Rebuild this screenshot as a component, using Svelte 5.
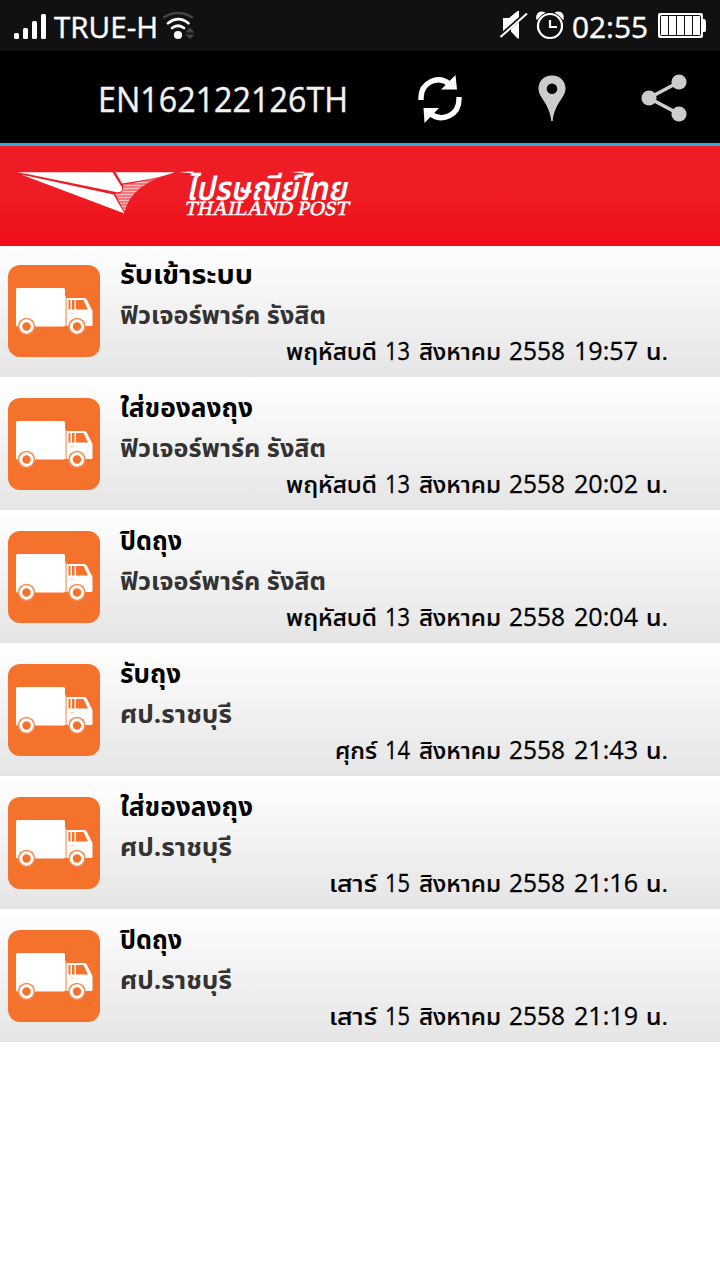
<script>
  const events = [
    { title: 'รับเข้าระบบ', tw: 133, place: 'ฟิวเจอร์พาร์ค รังสิต', pw: 206, day: 'พฤหัสบดี', dw: 91, date: '13', time: '19:57' },
    { title: 'ใส่ของลงถุง', tw: 133, place: 'ฟิวเจอร์พาร์ค รังสิต', pw: 206, day: 'พฤหัสบดี', dw: 91, date: '13', time: '20:02' },
    { title: 'ปิดถุง', tw: 62, place: 'ฟิวเจอร์พาร์ค รังสิต', pw: 206, day: 'พฤหัสบดี', dw: 91, date: '13', time: '20:04' },
    { title: 'รับถุง', tw: 61, place: 'ศป.ราชบุรี', pw: 112, day: 'ศุกร์', dw: 42, date: '14', time: '21:43' },
    { title: 'ใส่ของลงถุง', tw: 133, place: 'ศป.ราชบุรี', pw: 112, day: 'เสาร์', dw: 48, date: '15', time: '21:16' },
    { title: 'ปิดถุง', tw: 62, place: 'ศป.ราชบุรี', pw: 112, day: 'เสาร์', dw: 48, date: '15', time: '21:19' }
  ];
</script>

{#snippet fit(text, width, kind)}
  <svg class="fit {kind}" {width} height="36"><text x="0" y="28" textLength={width} lengthAdjust="spacingAndGlyphs">{text}</text></svg>
{/snippet}

<div class="screen">
  <div class="status">
    <svg class="signal" width="33" height="26" viewBox="0 0 33 26" fill="#fff">
      <rect x="0" y="19" width="5" height="6" rx="1.5" /><rect x="9" y="14" width="5" height="11" rx="1.5" />
      <rect x="18" y="7" width="5" height="18" rx="1.5" /><rect x="27" y="0" width="5" height="25" rx="1.5" />
    </svg>
    {@render fit('TRUE-H', 104, 'carrier')}
    <svg class="wifi" width="33" height="30" viewBox="162 11 33 30" fill="none" stroke-linecap="round">
      <path d="M164 17.2Q178 8.8 192 17.2" stroke="#444" stroke-width="2.4" />
      <path d="M168 23.2Q178 15.200 188.500 23.200M172 28Q178 23.500 184 28" stroke="#fff" stroke-width="2.700" />
      <circle cx="178" cy="35" r="4.100" fill="#fff" />
      <path d="M185.500 32.500L190 27.500L194.500 32.500ZM185.500 34.500L190 39L194.500 34.500Z" fill="#444" />
    </svg>
    <span class="grow"></span>
    <svg class="mute" width="30" height="30" viewBox="499 10 30 30" fill="#fff">
      <path d="M503 18H509L517.500 11H519V17L503 31ZM519 22V38.500H517.500L511 31.500V29Z" />
      <path d="M500.500 37L527 13.500" stroke="#fff" stroke-width="2" />
    </svg>
    <svg class="alarm" width="30" height="30" viewBox="535 10 30 30" fill="none" stroke="#fff">
      <path d="M536.500 20C534.500 12 542 9 546.500 13.500ZM563.500 20C565.500 12 558 9 553.500 13.500Z" fill="#fff" stroke="none" />
      <circle cx="550" cy="26" r="13.500" fill="#111" stroke="#111" />
      <circle cx="550" cy="26" r="12" stroke-width="2.200" /><path d="M550 20V27H557" stroke-width="2.200" />
    </svg>
    {@render fit('02:55', 76, 'clock')}
    <svg class="battery" width="49" height="26" viewBox="0 0 49 26">
      <rect x="0" y="0" width="45" height="25" rx="2" fill="#fff" />
      <path d="M45 6H46.500Q48 7 48 9V17Q48 19 46.500 19H45Z" fill="#fff" />
      <rect x="2.500" y="2.500" width="40" height="20" rx="1" fill="#fff" stroke="#111" />
      <path d="M10.500 3V22M18.500 3V22M26.500 3V22M34.500 3V22" stroke="#111" />
    </svg>
  </div>

  <div class="toolbar">
    {@render fit('EN162122126TH', 250, 'code')}
    <svg class="refresh" width="46" height="50" viewBox="417 74 46 50" fill="none">
      <path d="M421 100V98C421 82 438 75 449.500 84M459 97V99C459 115 443 122.500 430.500 114" stroke="#fff" stroke-width="5.400" />
      <path d="M455.500 75L457 89.500H441ZM423.500 108L439 108L424.500 123Z" fill="#fff" />
    </svg>
    <svg class="pin" width="28" height="48" viewBox="538 74 28 48">
      <path fill="#ccc" fill-rule="evenodd" d="M552 75.500C543.500 75.500 538.500 81.500 538.500 88.500C538.500 98 549.500 103 551.300 121H552.700C554.500 103 565.500 98 565.500 88.500C565.500 81.500 560.500 75.500 552 75.500ZM552 83.500A5.300 5.300 0 1 1 552 94.100A5.300 5.300 0 1 1 552 83.500Z" />
    </svg>
    <svg class="share" width="46" height="48" viewBox="641 74 46 48" fill="#ccc">
      <path d="M679 82L649 98L679 114" fill="none" stroke="#ccc" stroke-width="3.600" />
      <circle cx="679" cy="82" r="7.600" /><circle cx="649" cy="98" r="7.600" /><circle cx="679" cy="114" r="7.600" />
    </svg>
  </div>

  <div class="banner">
    <svg class="wing" width="158" height="45" viewBox="17 170 158 45">
      <defs>
        <clipPath id="feathers"><path d="M123 184.500Q146 182 174 172.500Q131 184 124.500 212L115 193.500H120Q124 191 123 184.500Z" /></clipPath>
      </defs>
      <path fill="#fff" d="M17 172.200H112.500L122 187.500Q123 192.500 117 192.200L27 174ZM21 174.500L113.500 194.500L124.500 213.500ZM115.500 172.200H175Q158 178 144 180L122 183.500Z" />
      <g clip-path="url(#feathers)">
        <rect x="112" y="172" width="64" height="42" fill="#fff" opacity=".3" />
        <path d="M112 182.500H176M112 185.500H176M112 188.500H176M112 191.500H176M112 194.500H176M112 197.500H176M112 200.500H176M112 203.500H176M112 206.500H176M112 209.500H176" stroke="#fff" stroke-opacity=".6" stroke-width="1.300" />
      </g>
    </svg>
    <svg class="brand" width="172" height="50" viewBox="0 0 172 50" fill="#fff">
      <g transform="skewX(-12)">
        <path d="M0 3L14 2.500V4.500ZM112 3L125 2.500V4.500Z" />
        <text class="thai" x="12" y="30.500" textLength="161" lengthAdjust="spacingAndGlyphs">ไปรษณีย์ไทย</text>
        <text class="latin" x="14" y="46.500" textLength="164" lengthAdjust="spacingAndGlyphs">THAILAND POST</text>
      </g>
    </svg>
  </div>

  <div class="list">
    {#each events as e}
      <div class="row">
        <svg class="truck" width="92" height="92" viewBox="0 0 92 92">
          <rect width="92" height="92" rx="12" fill="#f4722b" />
          <rect x="8" y="23" width="49" height="38.500" rx="1.500" fill="#fff" />
          <path d="M58.500 33H76Q78 33 79 35L84.500 46V59.500Q84.500 61 83 61H58.500Z" fill="#fff" />
          <path d="M60.500 35H62.500V44.500H60.500ZM64 35H66.500V44.500H64ZM68 35H75.500L80 44.500H68Z" fill="#f4722b" />
          <path d="M57.500 31V61" stroke="#fbc5a6" />
          <path d="M62 48.500H66" stroke="#fbd0b6" />
          {#each [18.5, 69] as x}
            <circle cx={x} cy="61.500" r="8.700" fill="#f68a50" />
            <circle cx={x} cy="61.500" r="5.700" fill="#f4722b" stroke="#fff" stroke-width="3" />
          {/each}
        </svg>
        <div class="info">
          {@render fit(e.title, e.tw, 'title')}
          {@render fit(e.place, e.pw, 'place')}
          <div class="when">
            {@render fit(e.day, e.dw, 'word')}
            {@render fit(e.date, 25, 'num')}
            {@render fit('สิงหาคม', 82, 'word')}
            {@render fit('2558', 56, 'num')}
            {@render fit(e.time, 64, 'num')}
            {@render fit('น.', 22, 'word')}
          </div>
        </div>
      </div>
    {/each}
  </div>
</div>

<style>
  :global(body) { margin: 0; background: #fff; }
  .screen { width: 720px; height: 1280px; overflow: hidden; background: #fff; font-family: "Open Sans", "Noto Sans", "Noto Sans Thai", sans-serif; }
  svg { display: block; flex: none; overflow: visible; }
  .grow { flex: 1; }
  .status { height: 51px; background: #111; display: flex; align-items: flex-start; box-sizing: border-box; padding: 0 14px; }
  .status .signal { margin-top: 14px; }
  .status .fit { margin-top: 10px; fill: #fff; stroke: #fff; stroke-width: .4px; font-size: 29px; }
  .status .carrier { margin-left: 7px; }
  .wifi { margin: 11px 0 0 4px; }
  .mute { margin-top: 10px; }
  .alarm { margin: 10px 7px 0 6px; }
  .battery { margin: 13px -1px 0 10px; }
  .toolbar { height: 92px; background: #000; border-bottom: 3px solid #33a9dc; display: flex; align-items: flex-start; padding-left: 98px; }
  .code { margin-top: 33px; fill: #f3f3f3; stroke: #f3f3f3; stroke-width: .4px; font-size: 34px; }
  .refresh { margin: 23px 0 0 69px; }
  .pin { margin: 23px 0 0 75px; }
  .share { margin: 23px 0 0 75px; }
  .banner { height: 100px; position: relative; z-index: 1; background: linear-gradient(#ee1c25 0%, #ee1c25 45%, #f10e18 100%); display: flex; align-items: flex-start; }
  .wing { margin: 24px 0 0 17px; }
  .brand { margin: 23px 0 0 5px; }
  .thai { font-size: 33px; font-weight: 600; }
  .latin { font: 20px "Liberation Serif", serif; stroke: #fff; stroke-width: .6px; }
  .list { margin-top: -2px; }
  .row { height: 133px; display: flex; box-sizing: border-box; padding: 21px 52px 0 8px; background: linear-gradient(#fff, #e5e5e5); }
  .info { flex: 1; margin: -9px 0 0 20px; }
  .title { font-size: 26px; font-weight: 700; fill: #000; }
  .place { font-size: 25px; font-weight: 700; fill: #333; margin-top: 4px; }
  .when { display: flex; justify-content: flex-end; gap: 8.5px; }
  .word { font-size: 23px; font-weight: 500; fill: #000; stroke: #000; stroke-width: .2px; }
  .num { font-size: 26px; fill: #000; stroke: #000; stroke-width: .3px; }
</style>
